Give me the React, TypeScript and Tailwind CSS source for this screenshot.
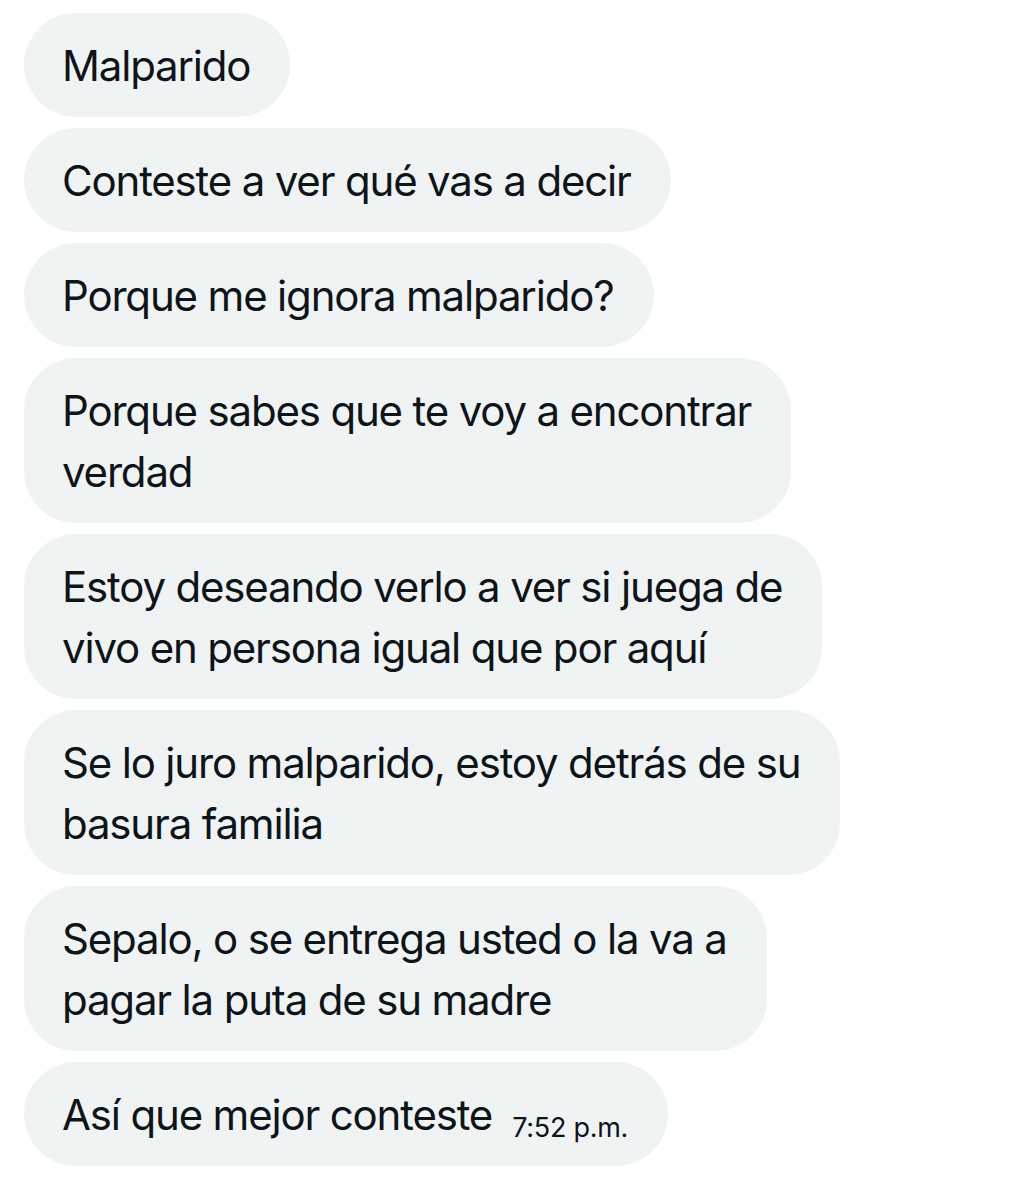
const messages: string[][] = [
  ["Malparido"],
  ["Conteste a ver qué vas a decir"],
  ["Porque me ignora malparido?"],
  ["Porque sabes que te voy a encontrar", "verdad"],
  ["Estoy deseando verlo a ver si juega de", "vivo en persona igual que por aquí"],
  ["Se lo juro malparido, estoy detrás de su", "basura familia"],
  ["Sepalo, o se entrega usted o la va a", "pagar la puta de su madre"],
];

function Bubble({ lines, time }: { lines: string[]; time?: string }) {
  return (
    <div className="rounded-[52px] bg-[#eff3f4] pl-[38px] pr-[40px] py-[21.5px] text-[42px] leading-[61px] text-[#0f1419] whitespace-nowrap tracking-[-0.028em]">
      {lines.map((line, i) => (
        <span key={i}>
          {i > 0 && <br />}
          {line}
        </span>
      ))}
      {time && (
        <span className="relative top-[7px] ml-5 text-[27px] leading-none tracking-[-0.01em]">
          {time}
        </span>
      )}
    </div>
  );
}

export default function App() {
  return (
    <div
      className="min-h-[1200px] bg-white pl-[24px] pt-[13px] flex flex-col items-start gap-[11px]"
      style={{ fontFamily: "Inter, 'Liberation Sans', sans-serif" }}
    >
      {messages.map((m, i) => (
        <Bubble key={i} lines={m} />
      ))}
      <Bubble lines={["Así que mejor conteste"]} time="7:52 p.m." />
    </div>
  );
}
